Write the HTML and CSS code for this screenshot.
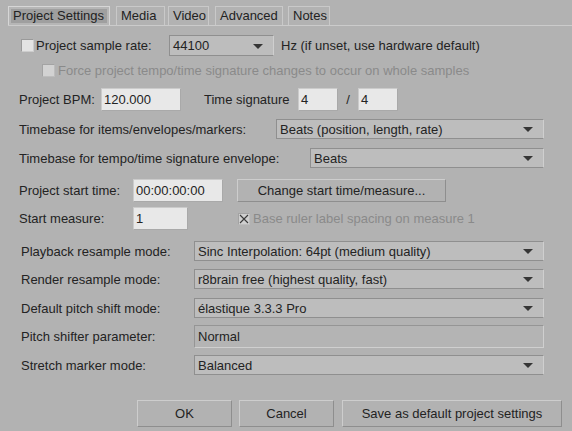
FILE: index.html
```html
<!DOCTYPE html>
<html>
<head>
<meta charset="utf-8">
<link rel="stylesheet" href="styles.css">
</head>
<body>
<div class="dlg">
  <div class="tabs">
    <div class="tab sel"><span class="tl">Project Settings</span></div>
    <div class="tab t-media">Media</div>
    <div class="tab t-video">Video</div>
    <div class="tab t-adv">Advanced</div>
    <div class="tab t-notes">Notes</div>
  </div>

  <div class="row r1">
    <span class="cb"></span>
    <span class="lbl w-sr">Project sample rate:</span>
    <div class="dd w-105"><span>44100</span><i class="arr"></i></div>
    <span class="hz">Hz (if unset, use hardware default)</span>
  </div>

  <div class="row r2">
    <span class="cb dis"></span>
    <span class="dtext">Force project tempo/time signature changes to occur on whole samples</span>
  </div>

  <div class="row r3">
    <span class="lbl w-bpm">Project BPM:</span>
    <div class="tb w-80">120.000</div>
    <span class="lbl w-ts">Time signature</span>
    <div class="tb w-40">4</div>
    <span class="slash">/</span>
    <div class="tb w-40">4</div>
  </div>

  <div class="row r4">
    <span class="lbl w-tb1">Timebase for items/envelopes/markers:</span>
    <div class="dd w-268"><span>Beats (position, length, rate)</span><i class="arr"></i></div>
  </div>

  <div class="row r5">
    <span class="lbl w-tb2">Timebase for tempo/time signature envelope:</span>
    <div class="dd w-234"><span>Beats</span><i class="arr"></i></div>
  </div>

  <div class="row r6">
    <span class="lbl w-st">Project start time:</span>
    <div class="tb w-90">00:00:00:00</div>
    <button class="btn w-209">Change start time/measure...</button>
  </div>

  <div class="row r7">
    <span class="lbl w-st">Start measure:</span>
    <div class="tb w-55">1</div>
    <span class="cb dis chk"><svg width="10" height="10" viewBox="0 0 10 10"><path d="M1 1 L9 9 M9 1 L1 9" stroke="#3a3a3a" stroke-width="1.1" fill="none"/></svg></span>
    <span class="dtext">Base ruler label spacing on measure 1</span>
  </div>

  <div class="row r8 ind">
    <span class="lbl w-pl">Playback resample mode:</span>
    <div class="dd w-350"><span>Sinc Interpolation: 64pt (medium quality)</span><i class="arr"></i></div>
  </div>
  <div class="row r9 ind">
    <span class="lbl w-pl">Render resample mode:</span>
    <div class="dd w-350"><span>r8brain free (highest quality, fast)</span><i class="arr"></i></div>
  </div>
  <div class="row r10 ind">
    <span class="lbl w-pl">Default pitch shift mode:</span>
    <div class="dd w-350"><span>élastique 3.3.3 Pro</span><i class="arr"></i></div>
  </div>
  <div class="row r11 ind">
    <span class="lbl w-pl">Pitch shifter parameter:</span>
    <div class="fld w-350">Normal</div>
  </div>
  <div class="row r12 ind">
    <span class="lbl w-pl">Stretch marker mode:</span>
    <div class="dd w-350"><span>Balanced</span><i class="arr"></i></div>
  </div>

  <div class="row buttons">
    <button class="btn b-ok">OK</button>
    <button class="btn b-cancel">Cancel</button>
    <button class="btn b-save">Save as default project settings</button>
  </div>
</div>
</body>
</html>
```

FILE: styles.css
```css
html, body {
  margin: 0;
  padding: 0;
}
body {
  width: 572px;
  height: 431px;
  overflow: hidden;
  background: #b2b2b2;
  font-family: "Liberation Sans", Arial, sans-serif;
  font-size: 13px;
  color: #232323;
}
.dlg {
  display: flex;
  flex-direction: column;
}
.tabs {
  display: flex;
  align-items: flex-end;
  margin: 6px 0 0 8px;
  height: 19px;
  border-bottom: 1px solid #cbcbcb;
}
.tab {
  box-sizing: border-box;
  height: 19px;
  line-height: 17px;
  padding: 0 4px;
  border: 1px solid #c9c9c9;
  border-bottom: none;
  color: #222;
  flex: none;
}
.tab.sel {
  width: 102px;
  padding: 2px 2px 0 2px;
  border: 1px solid #d6d6d6;
  border-bottom: none;
  background: #b6b6b6;
}
.tab.sel .tl {
  display: block;
  background: #9f9f9f;
  line-height: 14px;
  height: 14px;
  padding: 0 2px 0 2px;
  overflow: hidden;
  white-space: nowrap;
}
.t-media { margin-left: 6px; width: 49px; }
.t-video { margin-left: 3px; width: 41px; }
.t-adv { margin-left: 6px; width: 68px; }
.t-notes { margin-left: 5px; width: 42px; }

.row {
  display: flex;
  align-items: center;
  padding-left: 19px;
  flex: none;
}
.row.ind { padding-left: 21px; }
.lbl { flex: none; white-space: nowrap; }

.r1 { margin-top: 9px; height: 21px; padding-left: 21px; }
.r2 { margin-top: 8px; height: 13px; padding-left: 42px; }
.r3 { margin-top: 11px; height: 23px; }
.r4 { margin-top: 8px; height: 20px; }
.r5 { margin-top: 9px; height: 20px; }
.r6 { margin-top: 11px; height: 23px; }
.r7 { margin-top: 5px; height: 23px; }
.r8 { margin-top: 11px; height: 20px; }
.r9 { margin-top: 8px; height: 20px; }
.r10 { margin-top: 9px; height: 20px; }
.r11 { margin-top: 7px; height: 23px; }
.r12 { margin-top: 7px; height: 20px; }
.buttons { margin-top: 25px; height: 27px; padding-left: 137px; }

.cb {
  box-sizing: border-box;
  width: 13px;
  height: 13px;
  flex: none;
  background: #e3e3e3;
  border: 1px solid #cdcdcd;
  border-top-color: #9a9a9a;
  border-left-color: #9a9a9a;
  margin-right: 2px;
  display: flex;
  align-items: center;
  justify-content: center;
}
.cb.dis {
  background: #d2d2d2;
  border-color: #bdbdbd;
  border-top-color: #a3a3a3;
  border-left-color: #a3a3a3;
  margin-right: 3px;
}
.cb.chk {
  width: 12px;
  height: 12px;
  margin-left: 50px;
  background: #cfcfcf;
}
.dtext { color: #8a8a8a; white-space: nowrap; }

.w-sr { width: 133px; }
.w-bpm { width: 82px; }
.w-ts { width: 94px; margin-left: 23px; }
.w-tb1 { width: 257px; }
.w-tb2 { width: 291px; }
.w-st { width: 114px; }
.w-pl { width: 173px; }

.dd {
  box-sizing: border-box;
  flex: none;
  height: 20px;
  background: #bdbdbd;
  border: 1px solid #cfcfcf;
  border-top-color: #8f8f8f;
  border-left-color: #8f8f8f;
  border-bottom-color: #8f8f8f;
  border-right-color: #cfcfcf;
  display: flex;
  align-items: center;
  justify-content: space-between;
  padding: 0 10px 0 3px;
  white-space: nowrap;
}
.r1 .dd { height: 21px; }
.arr {
  width: 0;
  height: 0;
  border-left: 5px solid transparent;
  border-right: 5px solid transparent;
  border-top: 5px solid #363636;
  margin-top: 1px;
}
.w-105 { width: 105px; }
.w-268 { width: 268px; }
.w-234 { width: 234px; }
.w-350 { width: 350px; }
.w-80 { width: 80px; }
.w-40 { width: 40px; }
.w-90 { width: 90px; }
.w-55 { width: 55px; }
.w-209 { width: 209px; }

.hz { margin-left: 7px; white-space: nowrap; }

.tb {
  box-sizing: border-box;
  flex: none;
  height: 23px;
  background: #e8e8e8;
  border: 1px solid #cbcbcb;
  border-bottom-color: #a9a9a9;
  border-right-color: #a9a9a9;
  padding: 0 2px;
  line-height: 21px;
  white-space: nowrap;
}
.slash { width: 20px; text-align: center; flex: none; margin: 0; }

.fld {
  box-sizing: border-box;
  flex: none;
  height: 23px;
  background: #b4b4b4;
  border: 1px solid #cfcfcf;
  border-top-color: #959595;
  border-left-color: #959595;
  padding: 0 3px;
  line-height: 21px;
}

.btn {
  box-sizing: border-box;
  flex: none;
  height: 23px;
  background: #b2b2b2;
  border: 1px solid #8e8e8e;
  border-top-color: #cdcdcd;
  border-left-color: #cdcdcd;
  font-family: "Liberation Sans", Arial, sans-serif;
  font-size: 13px;
  color: #232323;
  padding: 0;
  margin: 0 0 0 14px;
  text-align: center;
}
.buttons .btn { height: 27px; }
.b-ok { width: 95px; margin-left: 0; }
.b-cancel { width: 95px; margin-left: 7px; }
.b-save { width: 220px; margin-left: 8px; }
```
